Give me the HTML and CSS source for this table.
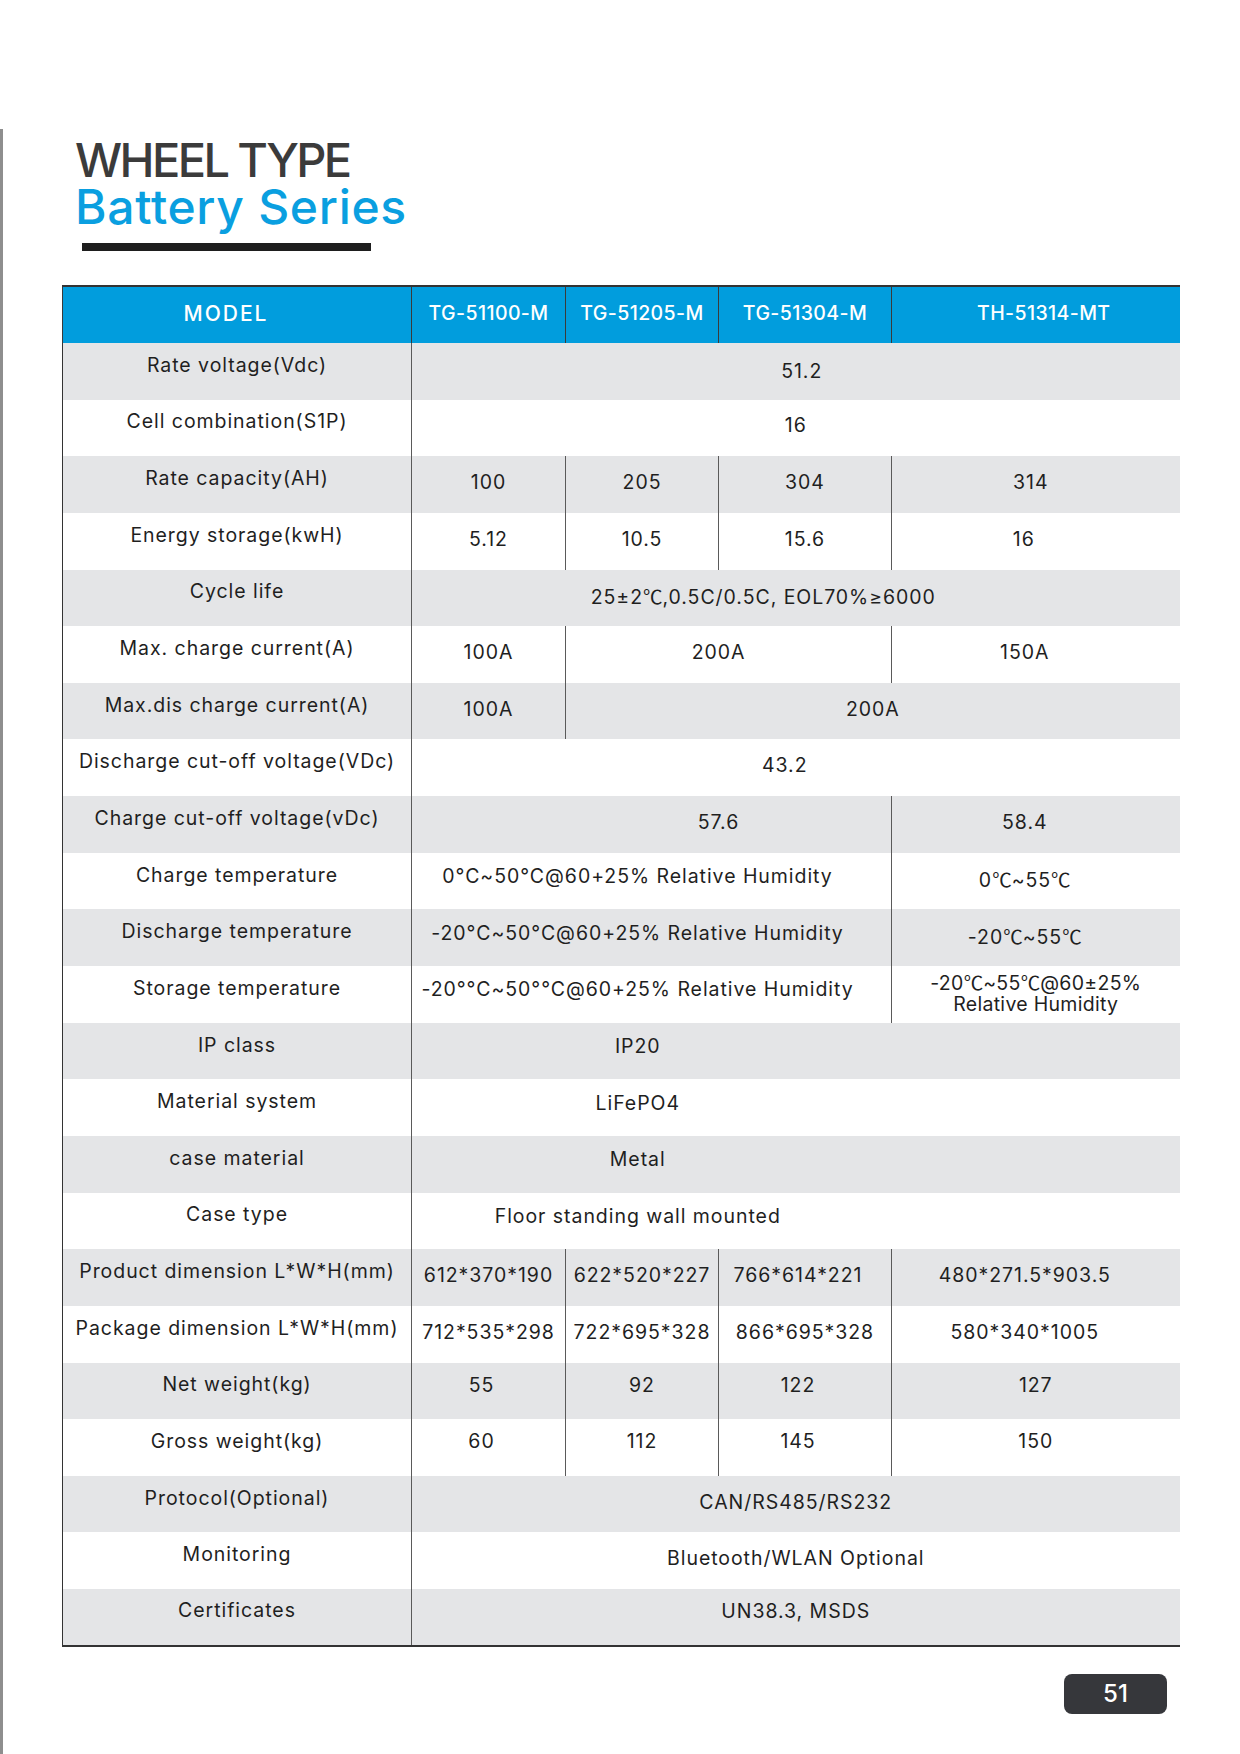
FILE: index.html
```html
<!DOCTYPE html>
<html lang="en">
<head>
    <meta charset="UTF-8">
    <meta name="viewport" content="width=device-width, initial-scale=1.0">
    <title>Wheel Type Battery Series</title>
    <link rel="stylesheet" href="styles.css">
</head>
<body>
    <div class="page">
        <div class="heading">
            <h1>WHEEL TYPE</h1>
            <h2>Battery Series</h2>
            <div class="heading-bar"></div>
        </div>

        <table class="spec-table">
            <colgroup>
                <col class="c-label">
                <col class="c-a">
                <col class="c-b">
                <col class="c-c">
                <col class="c-d">
            </colgroup>
            <thead>
                <tr>
                    <th class="model">MODEL</th>
                    <th>TG-51100-M</th>
                    <th>TG-51205-M</th>
                    <th>TG-51304-M</th>
                    <th class="last">TH-51314-MT</th>
                </tr>
            </thead>
            <tbody>
                <tr>
                    <td class="label">Rate voltage(Vdc)</td>
                    <td colspan="4" class="nudge-r">51.2</td>
                </tr>
                <tr>
                    <td class="label">Cell combination(S1P)</td>
                    <td colspan="4">16</td>
                </tr>
                <tr>
                    <td class="label">Rate capacity(AH)</td>
                    <td>100</td>
                    <td>205</td>
                    <td>304</td>
                    <td class="left-d">314</td>
                </tr>
                <tr>
                    <td class="label">Energy storage(kwH)</td>
                    <td>5.12</td>
                    <td>10.5</td>
                    <td>15.6</td>
                    <td class="left-a">16</td>
                </tr>
                <tr>
                    <td class="label">Cycle life</td>
                    <td colspan="4" class="cycle">25±2<span class="deg">℃</span>,0.5C/0.5C, EOL70%≥6000</td>
                </tr>
                <tr>
                    <td class="label">Max. charge current(A)</td>
                    <td>100A</td>
                    <td colspan="2" class="two-left">200A</td>
                    <td class="left-b">150A</td>
                </tr>
                <tr>
                    <td class="label">Max.dis charge current(A)</td>
                    <td>100A</td>
                    <td colspan="3">200A</td>
                </tr>
                <tr>
                    <td class="label">Discharge cut-off voltage(VDc)</td>
                    <td colspan="4" class="mid-l">43.2</td>
                </tr>
                <tr>
                    <td class="label">Charge cut-off voltage(vDc)</td>
                    <td colspan="3" class="push-right">57.6</td>
                    <td class="left-b">58.4</td>
                </tr>
                <tr>
                    <td class="label">Charge temperature</td>
                    <td colspan="3" class="three-left">0°C~50°C@60+25% Relative Humidity</td>
                    <td class="left-b">0<span class="deg">℃</span>~55<span class="deg">℃</span></td>
                </tr>
                <tr>
                    <td class="label">Discharge temperature</td>
                    <td colspan="3" class="three-left">-20°C~50°C@60+25% Relative Humidity</td>
                    <td class="left-b">-20<span class="deg">℃</span>~55<span class="deg">℃</span></td>
                </tr>
                <tr>
                    <td class="label">Storage temperature</td>
                    <td colspan="3" class="three-left">-20°°C~50°°C@60+25% Relative Humidity</td>
                    <td class="two-line">-20<span class="deg">℃</span>~55<span class="deg">℃</span>@60±25%<br>Relative Humidity</td>
                </tr>
                <tr>
                    <td class="label">IP class</td>
                    <td colspan="4" class="four-left">IP20</td>
                </tr>
                <tr>
                    <td class="label">Material system</td>
                    <td colspan="4" class="four-left">LiFePO4</td>
                </tr>
                <tr>
                    <td class="label">case material</td>
                    <td colspan="4" class="four-left">Metal</td>
                </tr>
                <tr>
                    <td class="label">Case type</td>
                    <td colspan="4" class="four-left">Floor standing wall mounted</td>
                </tr>
                <tr>
                    <td class="label">Product dimension L*W*H(mm)</td>
                    <td>612*370*190</td>
                    <td>622*520*227</td>
                    <td class="left-c">766*614*221</td>
                    <td class="left-b">480*271.5*903.5</td>
                </tr>
                <tr>
                    <td class="label">Package dimension L*W*H(mm)</td>
                    <td>712*535*298</td>
                    <td>722*695*328</td>
                    <td>866*695*328</td>
                    <td class="left-b">580*340*1005</td>
                </tr>
                <tr>
                    <td class="label">Net weight(kg)</td>
                    <td class="left-c high">55</td>
                    <td class="high">92</td>
                    <td class="left-c high">122</td>
                    <td class="high">127</td>
                </tr>
                <tr>
                    <td class="label">Gross weight(kg)</td>
                    <td class="left-c high">60</td>
                    <td class="high">112</td>
                    <td class="left-c high">145</td>
                    <td class="high">150</td>
                </tr>
                <tr>
                    <td class="label">Protocol(Optional)</td>
                    <td colspan="4">CAN/RS485/RS232</td>
                </tr>
                <tr>
                    <td class="label">Monitoring</td>
                    <td colspan="4">Bluetooth/WLAN Optional</td>
                </tr>
                <tr>
                    <td class="label">Certificates</td>
                    <td colspan="4" class="high">UN38.3, MSDS</td>
                </tr>
            </tbody>
        </table>

        <div class="footer">
            <span class="page-no">51</span>
        </div>
    </div>
</body>
</html>
```

FILE: styles.css
```css
body {
    margin: 0;
    background: #ffffff;
    font-family: Inter, "Open Sans", Arial, sans-serif;
    color: #1f1f1f;
}
.page {
    margin-top: 129px;
    min-height: 1625px;
    border-left: 3px solid #8e8e8e;
    box-sizing: border-box;
}
.heading {
    padding: 7px 0 0 72px;
}
.heading h1,
.heading h2 {
    margin: 0;
    font-size: 48px;
    line-height: 47px;
    font-weight: 500;
}
.heading h1 {
    color: #3b3b3b;
    font-size: 47px;
    letter-spacing: -2.6px;
}
.heading h2 {
    color: #0a9fe0;
    letter-spacing: 0.7px;
}
.heading-bar {
    width: 289px;
    height: 8px;
    margin: 13px 0 0 7px;
    background: #1e1e1e;
}

/* spec table */
.spec-table {
    margin: 34px 0 0 59px;
    width: 1117px;
    border-collapse: collapse;
    table-layout: fixed;
    border-top: 2px solid #333;
    border-bottom: 2px solid #333;
}
.c-label { width: 349px; }
.c-a { width: 154px; }
.c-b { width: 153px; }
.c-c { width: 173px; }
.c-d { width: 288px; }

.spec-table th {
    height: 52px;
    padding: 0 0 4px;
    background: #019ddd;
    color: #fff;
    font-size: 19.5px;
    font-weight: 500;
    letter-spacing: 0.4px;
    white-space: nowrap;
    border-left: 1px solid #3a3a3a;
}
.spec-table th.model {
    padding-right: 22px;
    font-size: 21px;
    letter-spacing: 2px;
}
.spec-table th.last {
    padding-left: 16px;
}
.spec-table td {
    height: 56.65px;
    padding: 0 0 5px;
    box-sizing: border-box;
    text-align: center;
    font-size: 19.5px;
    letter-spacing: 0.95px;
    white-space: nowrap;
    border-left: 1px solid #5a5a5a;
}
.spec-table td.label {
    padding-bottom: 13px;
    border-left-color: #333;
}
.spec-table tbody tr:nth-child(odd) td {
    background: #e4e5e7;
}
.deg {
    font-family: "Noto Sans CJK SC", sans-serif;
    letter-spacing: 0;
}

/* small offsets of text in cells */
.spec-table td.nudge-r { padding-left: 12px; padding-bottom: 0; }
.spec-table td.cycle { padding-right: 65px; }
.spec-table td.two-left { padding-right: 20px; }
.spec-table td.mid-l { padding-right: 22px; }
.spec-table td.push-right { padding-left: 134px; }
.spec-table td.three-left { padding-right: 28px; padding-bottom: 10px; }
.spec-table td.four-left { padding-right: 316px; padding-bottom: 10px; }
.spec-table td.left-a { padding-right: 24px; }
.spec-table td.left-b { padding-right: 22px; }
.spec-table td.left-c { padding-right: 14px; }
.spec-table td.left-d { padding-right: 10px; }
.spec-table td.high { padding-bottom: 12px; }
.spec-table td.two-line {
    line-height: 21px;
    padding-bottom: 3px;
    letter-spacing: 0.3px;
}

.footer {
    display: flex;
    justify-content: flex-end;
    padding: 27px 73px 0 0;
}
.page-no {
    width: 103px;
    height: 40px;
    border-radius: 8px;
    background: #36373b;
    color: #fff;
    font-size: 24px;
    font-weight: 500;
    line-height: 40px;
    text-align: center;
}
```
